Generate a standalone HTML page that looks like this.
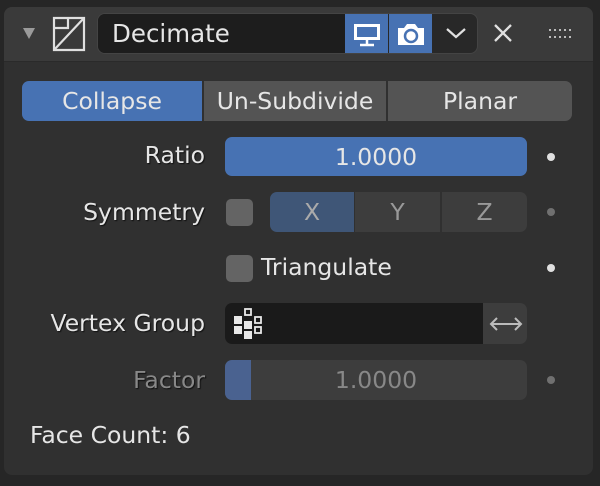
<!DOCTYPE html>
<html><head><meta charset="utf-8"><style>
*{margin:0;padding:0;box-sizing:border-box}
body{width:600px;height:486px;background:#262626;font-family:"DejaVu Sans","Liberation Sans",sans-serif;color:#e6e6e6;position:relative;overflow:hidden;font-size:23.5px}
.a{position:absolute}
.panel{left:4px;top:7px;width:589px;height:468px;background:#303030;border-radius:8px}
.head{left:4px;top:7px;width:589px;height:55px;background:#3a3a3a;border-radius:8px 8px 0 0;border-bottom:1px solid #2a2a2a}
.c{display:flex;align-items:center;justify-content:center}
.lbl{text-align:right;width:205px;left:0;text-shadow:1px 1px 1px #111}
.dot{width:8px;height:8px;border-radius:50%;background:#e0e0e0}
</style></head><body>
<div class="a panel"></div>
<div class="a head"></div>
<svg class="a" style="left:22px;top:26px" width="14" height="14"><polygon points="1,2 13,2 7,13" fill="#9a9a9a"/></svg>
<svg class="a" style="left:52px;top:16px" width="34" height="36" fill="none" stroke="#e0e0e0" stroke-width="2.2"><path d="M2,2 H32 V34 H2 Z M2,2 V34"/><path d="M2,34 L32,2"/><path d="M2,12 H16 V2"/></svg>
<div class="a" style="left:97px;top:13px;width:381px;height:41px;background:#282828;border-radius:8px;border:1px solid #444"></div>
<div class="a" style="left:98px;top:14px;width:247px;height:39px;background:#1d1d1d;border-radius:7px 0 0 7px;padding-left:14px;line-height:39px;font-size:24.5px">Decimate</div>
<div class="a c" style="left:345px;top:14px;width:43px;height:39px;background:#4772b3">
<svg width="30" height="26" fill="none" stroke="#fff" stroke-width="2.5"><rect x="2" y="3" width="26" height="16" fill="#fff" stroke="none"/><rect x="5" y="6" width="20" height="10" fill="#4772b3" stroke="none"/><path d="M15,19 V23 M8,24 H22"/></svg></div>
<div class="a c" style="left:389px;top:14px;width:43px;height:39px;background:#4772b3">
<svg width="30" height="26"><path d="M2,7 H8 L11,3 H19 L22,7 H28 V24 H2 Z" fill="#fff"/><circle cx="15" cy="15" r="6" fill="none" stroke="#4772b3" stroke-width="2.5"/></svg></div>
<svg class="a" style="left:445px;top:26px" width="22" height="14" fill="none" stroke="#e0e0e0" stroke-width="2.2"><path d="M2,3 L11,11 L20,3"/></svg>
<svg class="a" style="left:492px;top:22px" width="22" height="22" stroke="#e0e0e0" stroke-width="2.3"><path d="M3,3 L19,19 M19,3 L3,19"/></svg>
<svg class="a" style="left:549px;top:28px" width="24" height="12" fill="#bbb"><rect x="0" y="1" width="2" height="2"/><rect x="5" y="1" width="2" height="2"/><rect x="10" y="1" width="2" height="2"/><rect x="15" y="1" width="2" height="2"/><rect x="20" y="1" width="2" height="2"/><rect x="0" y="8" width="2" height="2"/><rect x="5" y="8" width="2" height="2"/><rect x="10" y="8" width="2" height="2"/><rect x="15" y="8" width="2" height="2"/><rect x="20" y="8" width="2" height="2"/></svg>

<div class="a c" style="left:22px;top:81px;width:180px;height:40px;background:#4772b3;border-radius:7px 0 0 7px">Collapse</div>
<div class="a c" style="left:204px;top:81px;width:182px;height:40px;background:#545454">Un-Subdivide</div>
<div class="a c" style="left:388px;top:81px;width:184px;height:40px;background:#545454;border-radius:0 7px 7px 0">Planar</div>

<div class="a lbl" style="top:141px">Ratio</div>
<div class="a c" style="left:225px;top:137px;width:302px;height:39px;background:#4772b3;border-radius:7px">1.0000</div>
<div class="a dot" style="left:547px;top:153px"></div>

<div class="a lbl" style="top:198px">Symmetry</div>
<div class="a" style="left:226px;top:199px;width:27px;height:27px;background:#646464;border-radius:5px"></div>
<div class="a c" style="left:270px;top:192px;width:84px;height:40px;background:#3f5677;border-radius:7px 0 0 7px;color:#aaa">X</div>
<div class="a c" style="left:355px;top:192px;width:85px;height:40px;background:#3d3d3d;color:#999">Y</div>
<div class="a c" style="left:442px;top:192px;width:85px;height:40px;background:#3d3d3d;border-radius:0 7px 7px 0;color:#999">Z</div>
<div class="a dot" style="left:547px;top:208px;background:#707070"></div>

<div class="a" style="left:226px;top:255px;width:27px;height:27px;background:#646464;border-radius:5px"></div>
<div class="a" style="left:261px;top:253px">Triangulate</div>
<div class="a dot" style="left:547px;top:264px"></div>

<div class="a lbl" style="top:309px">Vertex Group</div>
<div class="a" style="left:225px;top:303px;width:302px;height:41px;background:#3d3d3d;border-radius:7px"></div>
<div class="a" style="left:225px;top:303px;width:258px;height:41px;background:#1a1a1a;border-radius:7px 0 0 7px"></div>
<svg class="a" style="left:233px;top:306px" width="36" height="34"><g fill="#e8e8e8"><rect x="1" y="10" width="8" height="8"/><rect x="1" y="20" width="8" height="8"/><rect x="11" y="15" width="8" height="8"/><rect x="11" y="25" width="8" height="8"/></g><g fill="none" stroke="#e8e8e8" stroke-width="1.8"><rect x="12" y="3" width="6" height="6"/><rect x="22" y="11" width="6" height="6"/><rect x="22" y="21" width="6" height="6"/></g></svg>
<svg class="a" style="left:489px;top:314px" width="34" height="20" fill="none" stroke="#bbb" stroke-width="2"><path d="M2,10 H32 M8,4 L2,10 L8,16 M26,4 L32,10 L26,16"/></svg>

<div class="a lbl" style="top:366px;color:#888">Factor</div>
<div class="a c" style="left:225px;top:360px;width:302px;height:40px;background:#3d3d3d;border-radius:7px;color:#888;overflow:hidden">1.0000<div class="a" style="left:0;top:0;width:26px;height:40px;background:#4a6290"></div></div>
<div class="a dot" style="left:547px;top:376px;background:#707070"></div>

<div class="a" style="left:30px;top:421px">Face Count: 6</div>
</body></html>
